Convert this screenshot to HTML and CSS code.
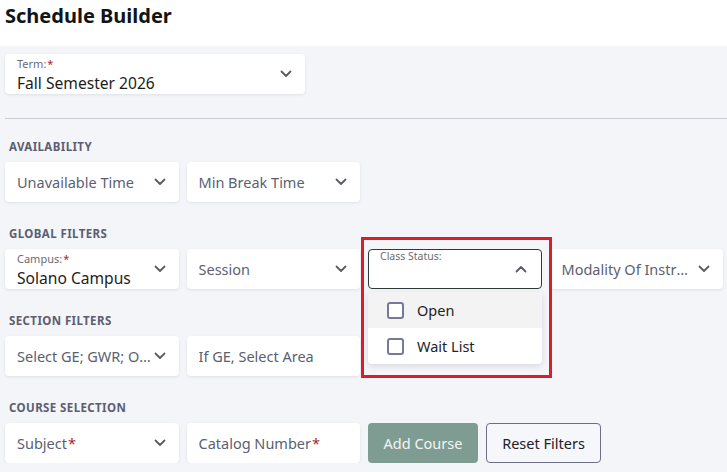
FILE: index.html
```html
<!DOCTYPE html>
<html lang="en">
<head>
    <meta charset="UTF-8">
    <meta name="viewport" content="width=device-width, initial-scale=1.0">
    <title>Schedule Builder</title>
    <link rel="stylesheet" href="styles.css">
</head>
<body>
    <header class="page-header">
        <h1>Schedule Builder</h1>
    </header>

    <main class="builder">
        <div class="term-row">
            <div class="field field-term">
                <div class="field-text">
                    <span class="float-label">Term:<span class="req">*</span></span>
                    <span class="value">Fall Semester 2026</span>
                </div>
                <svg class="chevron" viewBox="0 0 12 8"><path d="M1.5 1.5 L6 6 L10.5 1.5"/></svg>
            </div>
        </div>

        <hr class="divider">

        <section class="filter-section">
            <h3>Availability</h3>
            <div class="field-grid">
                <div class="field">
                    <span class="placeholder">Unavailable Time</span>
                    <svg class="chevron" viewBox="0 0 12 8"><path d="M1.5 1.5 L6 6 L10.5 1.5"/></svg>
                </div>
                <div class="field">
                    <span class="placeholder">Min Break Time</span>
                    <svg class="chevron" viewBox="0 0 12 8"><path d="M1.5 1.5 L6 6 L10.5 1.5"/></svg>
                </div>
            </div>
        </section>

        <section class="filter-section">
            <h3>Global Filters</h3>
            <div class="field-grid">
                <div class="field">
                    <div class="field-text">
                        <span class="float-label">Campus:<span class="req">*</span></span>
                        <span class="value">Solano Campus</span>
                    </div>
                    <svg class="chevron" viewBox="0 0 12 8"><path d="M1.5 1.5 L6 6 L10.5 1.5"/></svg>
                </div>
                <div class="field">
                    <span class="placeholder">Session</span>
                    <svg class="chevron" viewBox="0 0 12 8"><path d="M1.5 1.5 L6 6 L10.5 1.5"/></svg>
                </div>
                <div class="status-wrap">
                    <div class="field field-open">
                        <div class="field-text">
                            <span class="float-label">Class Status:</span>
                            <span class="value">&nbsp;</span>
                        </div>
                        <svg class="chevron" viewBox="0 0 12 8"><path d="M1.5 6.5 L6 2 L10.5 6.5"/></svg>
                    </div>
                    <ul class="dropdown-menu">
                        <li class="hover"><span class="checkbox"></span>Open</li>
                        <li><span class="checkbox"></span>Wait List</li>
                    </ul>
                    <div class="highlight"></div>
                </div>
                <div class="field">
                    <span class="placeholder">Modality Of Instruction</span>
                    <svg class="chevron" viewBox="0 0 12 8"><path d="M1.5 1.5 L6 6 L10.5 1.5"/></svg>
                </div>
            </div>
        </section>

        <section class="filter-section">
            <h3>Section Filters</h3>
            <div class="field-grid">
                <div class="field">
                    <span class="placeholder">Select GE; GWR; Other</span>
                    <svg class="chevron chevron-tight" viewBox="0 0 12 8"><path d="M1.5 1.5 L6 6 L10.5 1.5"/></svg>
                </div>
                <div class="field">
                    <span class="placeholder">If GE, Select Area</span>
                </div>
            </div>
        </section>

        <section class="filter-section">
            <h3>Course Selection</h3>
            <div class="field-grid">
                <div class="field">
                    <span class="placeholder">Subject<span class="req">*</span></span>
                    <svg class="chevron" viewBox="0 0 12 8"><path d="M1.5 1.5 L6 6 L10.5 1.5"/></svg>
                </div>
                <div class="field">
                    <span class="placeholder">Catalog Number<span class="req">*</span></span>
                </div>
                <div class="button-row">
                    <button class="btn btn-add" type="button">Add Course</button>
                    <button class="btn btn-reset" type="button">Reset Filters</button>
                </div>
            </div>
        </section>
    </main>
</body>
</html>
```

FILE: styles.css
```css
body {
    margin: 0;
    font-family: "Noto Sans", "Open Sans", Arial, sans-serif;
    background-color: #f4f5f9;
    color: #1f2124;
}
.page-header {
    background-color: #ffffff;
    height: 46px;
    padding: 0 5px;
}
.page-header h1 {
    margin: 0;
    font-size: 20px;
    line-height: 32px;
    font-weight: 700;
    color: #121416;
}
.builder {
    padding: 8px 4px 0 5px;
}
.term-row {
    display: flex;
}
.field {
    display: flex;
    align-items: center;
    height: 40px;
    box-sizing: border-box;
    padding: 0 12px 0 12px;
    background-color: #ffffff;
    border-radius: 4px;
    box-shadow: 0 1px 3px rgba(30, 35, 60, 0.1);
    min-width: 0;
}
.field-term {
    width: 300px;
}
.field-text {
    display: flex;
    flex-direction: column;
    gap: 3px;
    flex: 1;
    min-width: 0;
    padding-top: 3px;
}
.float-label {
    font-size: 11px;
    line-height: 12px;
    color: #6a6c74;
}
.value {
    font-size: 15.6px;
    line-height: 20px;
    color: #1c1d20;
    white-space: nowrap;
}
.placeholder {
    flex: 1;
    min-width: 0;
    font-size: 14.5px;
    color: #5b5f72;
    white-space: nowrap;
    overflow: hidden;
    text-overflow: ellipsis;
}
.req {
    color: #a8262b;
    margin-left: 1px;
}
.chevron {
    width: 12px;
    height: 8px;
    flex-shrink: 0;
    margin-left: 8px;
    margin-right: 1px;
    fill: none;
    stroke: #5a5c63;
    stroke-width: 1.8;
    stroke-linecap: round;
    stroke-linejoin: round;
}
.chevron-tight {
    margin-left: 2px;
}
.divider {
    border: 0;
    border-top: 1px solid #c9cbd2;
    margin: 24px -4px 0 0;
}
.filter-section {
    margin-top: 24px;
}
.filter-section:first-of-type {
    margin-top: 20px;
}
.filter-section h3 {
    margin: 0 0 7px 4px;
    font-size: 11.5px;
    line-height: 16px;
    font-weight: 700;
    letter-spacing: 0.4px;
    text-transform: uppercase;
    color: #5b5e70;
}
.field-grid {
    display: grid;
    grid-template-columns: repeat(4, 1fr);
    gap: 8px;
}
.status-wrap {
    position: relative;
}
.field-open {
    border: 1px solid #2e3b35;
    box-shadow: none;
    padding-left: 11px;
    padding-right: 13px;
}
.field-open .field-text {
    padding-top: 0;
}
.field-open .float-label {
    font-size: 10.5px;
    margin-top: -4px;
}
.dropdown-menu {
    position: absolute;
    top: 43px;
    left: 0;
    right: 0;
    margin: 0;
    padding: 0;
    list-style: none;
    background-color: #ffffff;
    border-radius: 4px;
    box-shadow: 0 2px 6px rgba(30, 35, 60, 0.14);
    overflow: hidden;
    z-index: 2;
}
.dropdown-menu li {
    display: flex;
    align-items: center;
    height: 36px;
    padding-left: 19px;
    font-size: 14.5px;
    color: #222326;
}
.dropdown-menu li.hover {
    background-color: #f3f3f4;
}
.checkbox {
    width: 13px;
    height: 13px;
    border: 2px solid #777799;
    border-radius: 3px;
    margin-right: 13px;
    background-color: #ffffff;
}
.highlight {
    position: absolute;
    top: -12px;
    left: -7px;
    right: -10px;
    bottom: -89px;
    border: 3px solid #d61f28;
    pointer-events: none;
    z-index: 3;
}
.button-row {
    display: flex;
    gap: 8px;
    grid-column: span 2;
}
.btn {
    height: 40px;
    border-radius: 4px;
    font-family: inherit;
    font-size: 14.5px;
    padding: 0;
    white-space: nowrap;
    cursor: pointer;
}
.btn-add {
    width: 110px;
    border: 0;
    background-color: #7f9c92;
    color: #f2f5f3;
}
.btn-reset {
    width: 115px;
    border: 1px solid #6c6f82;
    background-color: #f6f7fa;
    color: #1f2023;
}
```
